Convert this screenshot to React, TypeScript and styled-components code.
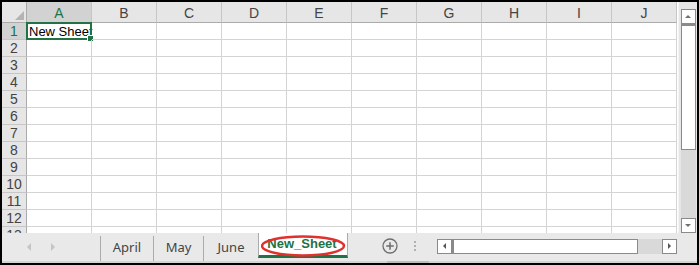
import React from "react";
import styled, { createGlobalStyle } from "styled-components";

const Global = createGlobalStyle`
  html, body { margin: 0; padding: 0; background: #fff; }
  body { font-family: "Liberation Sans", Arial, sans-serif; }
`;

const Frame = styled.div`
  width: 699px;
  height: 265px;
  box-sizing: border-box;
  border: 2px solid #000;
  display: flex;
  flex-direction: column;
  background: #fff;
  overflow: hidden;
`;

const Main = styled.div`
  display: flex;
  height: 231px;
  flex: none;
`;

const Grid = styled.div`
  display: grid;
  grid-template-columns: 25px repeat(10, 65px) 1px;
  grid-template-rows: 21px repeat(13, 17px);
  width: 676px;
  height: 231px;
  overflow: hidden;
  flex: none;
`;

const Corner = styled.div`
  background: #e6e6e6;
  border-right: 1px solid #ababab;
  border-bottom: 1px solid #ababab;
  box-sizing: border-box;
  position: relative;
  &::after {
    content: "";
    position: absolute;
    right: 2px;
    bottom: 2px;
    width: 0;
    height: 0;
    border-left: 9px solid transparent;
    border-bottom: 9px solid #b4b4b4;
  }
`;

const ColHead = styled.div<{ $sel?: boolean }>`
  background: ${(p) => (p.$sel ? "#d2d2d2" : "#e6e6e6")};
  color: ${(p) => (p.$sel ? "#217346" : "#444")};
  border-right: 1px solid #c6c6c6;
  border-bottom: 1px solid #ababab;
  box-sizing: border-box;
  display: flex;
  align-items: center;
  justify-content: center;
  font-size: 14px;
  padding-top: 1px;
`;

const RowHead = styled.div<{ $sel?: boolean }>`
  background: ${(p) => (p.$sel ? "#d2d2d2" : "#e6e6e6")};
  color: ${(p) => (p.$sel ? "#217346" : "#444")};
  border-right: 1px solid #ababab;
  border-bottom: 1px solid #c6c6c6;
  box-sizing: border-box;
  display: flex;
  align-items: center;
  justify-content: center;
  font-size: 14px;
`;

const Cell = styled.div`
  border-right: 1px solid #d4d4d4;
  border-bottom: 1px solid #d4d4d4;
  box-sizing: border-box;
  font-size: 13px;
  color: #000;
  display: flex;
  align-items: flex-end;
  padding: 0 0 0 2px;
  white-space: nowrap;
  position: relative;
`;

const Edge = styled.div`
  background: #fff;
`;

const Selection = styled.div`
  position: absolute;
  left: -1px;
  top: -1px;
  right: -1px;
  bottom: -1px;
  border: 2px solid #217346;
  pointer-events: none;
  &::after {
    content: "";
    position: absolute;
    right: -4px;
    bottom: -4px;
    width: 5px;
    height: 5px;
    background: #217346;
    border: 1px solid #fff;
  }
`;

const VScroll = styled.div`
  width: 19px;
  flex: none;
  background: #e6e6e6;
  display: flex;
  flex-direction: column;
  align-items: center;
  padding-top: 7px;
  box-sizing: border-box;
  border-left: 1px solid #f4f4f4;
`;

const ArrowBtn = styled.div`
  width: 15px;
  height: 15px;
  box-sizing: border-box;
  border: 1px solid #8a8a8a;
  background: #fff;
  display: flex;
  align-items: center;
  justify-content: center;
  flex: none;
`;

const VThumb = styled.div`
  width: 15px;
  height: 126px;
  box-sizing: border-box;
  border: 1px solid #8a8a8a;
  border-top: 2px solid #8a8a8a;
  background: #fff;
  flex: none;
`;

const VTrack = styled.div`
  width: 15px;
  flex: 1;
  background: #d9d9d9;
`;

const TabBar = styled.div`
  height: 30px;
  flex: none;
  background: #e9e9e9;
  display: flex;
  align-items: stretch;
  position: relative;
  border-bottom: 2px solid #d4d4d4;
  box-sizing: border-box;
`;

const Nav = styled.div`
  width: 98px;
  display: flex;
  align-items: center;
  padding-left: 25px;
  gap: 20px;
  box-sizing: border-box;
  flex: none;
`;

const Tri = styled.div<{ $dir: "left" | "right" | "up" | "down"; $c?: string; $s?: number }>`
  width: 0;
  height: 0;
  ${(p) => {
    const s = p.$s ?? 4;
    const c = p.$c ?? "#c4c4c4";
    if (p.$dir === "left")
      return `border-top:${s}px solid transparent;border-bottom:${s}px solid transparent;border-right:${s}px solid ${c};`;
    if (p.$dir === "right")
      return `border-top:${s}px solid transparent;border-bottom:${s}px solid transparent;border-left:${s}px solid ${c};`;
    if (p.$dir === "up")
      return `border-left:${s}px solid transparent;border-right:${s}px solid transparent;border-bottom:${s}px solid ${c};`;
    return `border-left:${s}px solid transparent;border-right:${s}px solid transparent;border-top:${s}px solid ${c};`;
  }}
`;

const Tab = styled.div<{ $w: number }>`
  width: ${(p) => p.$w}px;
  flex: none;
  display: flex;
  align-items: center;
  justify-content: center;
  font-family: "Noto Sans", "Liberation Sans", sans-serif;
  font-size: 13px;
  color: #444;
  border-left: 1px solid #ababab;
  box-sizing: border-box;
  padding-bottom: 4px;
  margin: 3px 0 0;
`;

const ActiveTab = styled.div`
  width: 90px;
  flex: none;
  position: relative;
  background: #fff;
  border-left: 1px solid #ababab;
  border-right: 1px solid #ababab;
  border-bottom: 3px solid #217346;
  box-sizing: border-box;
  display: flex;
  align-items: center;
  justify-content: center;
  font-family: "Liberation Sans", Arial, sans-serif;
  font-weight: 700;
  font-size: 13px;
  color: #217346;
  margin-bottom: 3px;
  padding-bottom: 1px;
  padding-right: 2px;
`;

const Ellipse = styled.svg`
  position: absolute;
  left: 2px;
  top: 2px;
  pointer-events: none;
`;

const PlusArea = styled.div`
  width: 70px;
  flex: none;
  display: flex;
  align-items: center;
  padding-left: 34px;
  gap: 16px;
  box-sizing: border-box;
  margin-bottom: 2px;
`;

const Dots = styled.div`
  display: flex;
  flex-direction: column;
  gap: 2px;
  span {
    width: 2px;
    height: 2px;
    background: #b0b0b0;
  }
`;

const HScroll = styled.div`
  display: flex;
  align-items: center;
  margin-left: 19px;
  width: 240px;
  margin-bottom: 2px;
`;

const HThumb = styled.div`
  width: 186px;
  height: 15px;
  box-sizing: border-box;
  border: 1px solid #8a8a8a;
  border-left: 2px solid #8a8a8a;
  background: #fff;
  flex: none;
`;

const HTrack = styled.div`
  width: 24px;
  height: 15px;
  background: #d9d9d9;
  flex: none;
`;

const Splitter = styled.div`
  position: absolute;
  left: 385px;
  bottom: -2px;
  width: 42px;
  height: 2px;
  background: #bdbdbd;
`;

const cols = ["A", "B", "C", "D", "E", "F", "G", "H", "I", "J"];
const rows = Array.from({ length: 13 }, (_, i) => i + 1);

export default function App() {
  return (
    <>
      <Global />
      <Frame>
        <Main>
          <Grid>
            <Corner />
            {cols.map((c) => (
              <ColHead key={c} $sel={c === "A"}>
                {c}
              </ColHead>
            ))}
            <Edge />
            {rows.map((r) => (
              <React.Fragment key={r}>
                <RowHead $sel={r === 1}>{r}</RowHead>
                {cols.map((c) => (
                  <Cell key={c}>
                    {r === 1 && c === "A" ? (
                      <>
                        New Sheet
                        <Selection />
                      </>
                    ) : null}
                  </Cell>
                ))}
                <Edge />
              </React.Fragment>
            ))}
          </Grid>
          <VScroll>
            <ArrowBtn>
              <Tri $dir="up" $c="#707070" $s={3} />
            </ArrowBtn>
            <VThumb />
            <VTrack />
            <ArrowBtn>
              <Tri $dir="down" $c="#707070" $s={3} />
            </ArrowBtn>
          </VScroll>
        </Main>
        <TabBar>
          <Nav>
            <Tri $dir="left" />
            <Tri $dir="right" />
          </Nav>
          <Tab $w={53}>April</Tab>
          <Tab $w={50}>May</Tab>
          <Tab $w={55}>June</Tab>
          <ActiveTab>
            New_Sheet
            <Ellipse width="86" height="22" viewBox="0 0 86 22">
              <ellipse cx="42" cy="11" rx="41" ry="9.5" fill="none" stroke="#e0322d" strokeWidth="2.5" />
            </Ellipse>
          </ActiveTab>
          <PlusArea>
            <svg width="16" height="16" viewBox="0 0 16 16">
              <circle cx="8" cy="8" r="7" fill="none" stroke="#6e6e6e" strokeWidth="1.3" />
              <path d="M8 4.2v7.6M4.2 8h7.6" stroke="#6e6e6e" strokeWidth="1.5" />
            </svg>
            <Dots>
              <span />
              <span />
              <span />
            </Dots>
          </PlusArea>
          <HScroll>
            <ArrowBtn>
              <Tri $dir="left" $c="#555" $s={3} />
            </ArrowBtn>
            <HThumb />
            <HTrack />
            <ArrowBtn>
              <Tri $dir="right" $c="#555" $s={3} />
            </ArrowBtn>
          </HScroll>
          <Splitter />
        </TabBar>
      </Frame>
    </>
  );
}
